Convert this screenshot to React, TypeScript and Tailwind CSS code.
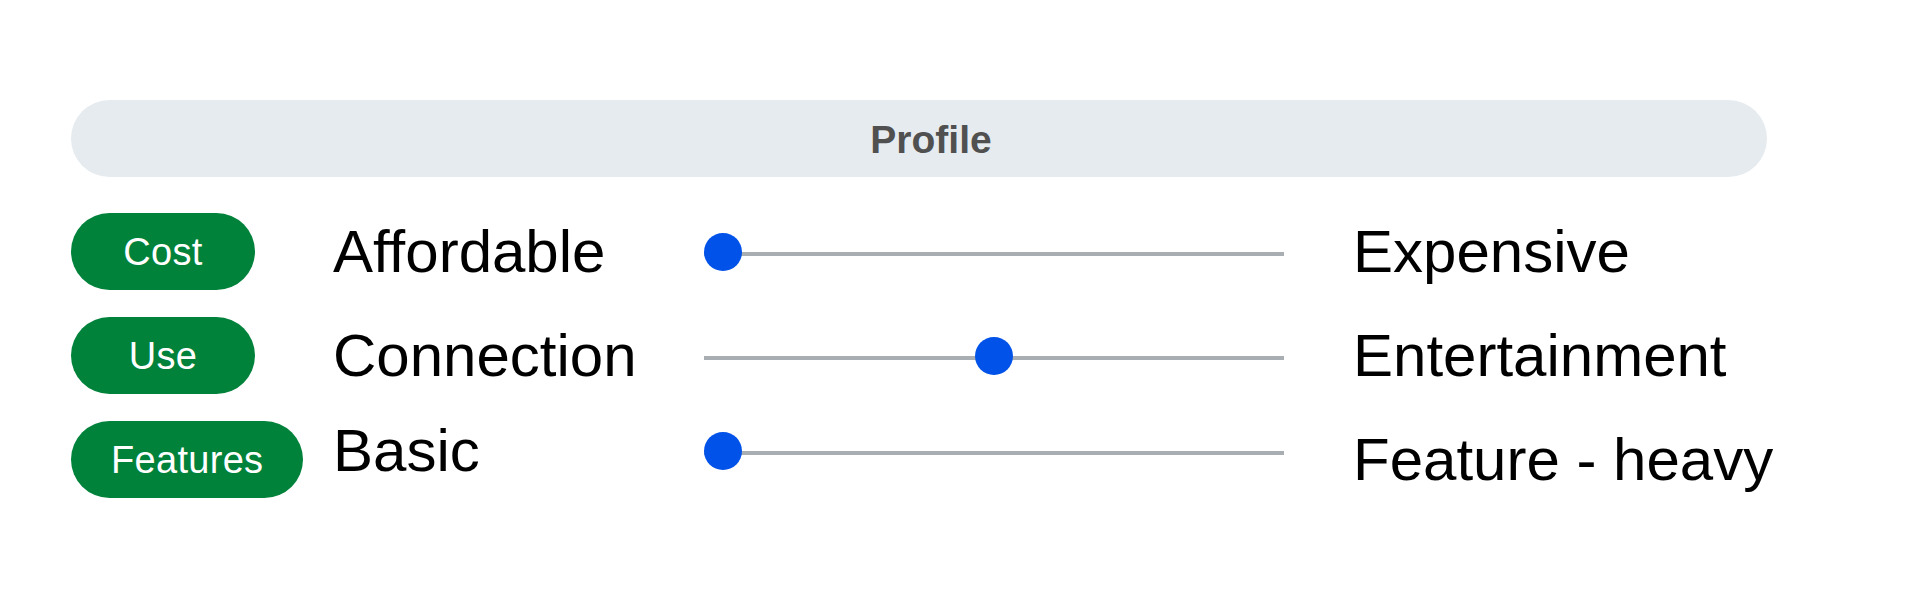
const rows = [
  { tag: "Cost", left: "Affordable", right: "Expensive", value: 0, shift: false },
  { tag: "Use", left: "Connection", right: "Entertainment", value: 0.5, shift: false },
  { tag: "Features", left: "Basic", right: "Feature - heavy", value: 0, shift: true },
];

const Slider = ({ value }: { value: number }) => {
  return (
    <div className="relative h-[4px] w-[580px] bg-[#a9aeb2]">
      <div
        className="absolute top-[-19px] h-[38px] w-[38px] rounded-full bg-[#0052e8]"
        style={{ left: `${value * 542}px` }}
      />
    </div>
  );
};

const App = () => {
  return (
    <div
      className="h-[600px] w-[1920px] bg-white pt-[100px] pl-[71px]"
      style={{ fontFamily: '"Liberation Sans", Arial, sans-serif' }}
    >
      <div className="flex h-[77px] w-[1696px] items-center justify-center rounded-full bg-[#e6ebef] pt-[2px] pl-[24px]">
        <span className="text-[39px] font-bold leading-none text-[#505050]">Profile</span>
      </div>

      <div className="mt-[36px] flex flex-col gap-[27px]">
        {rows.map((row) => (
          <div key={row.tag} className="flex h-[77px] items-center">
            <div className="w-[262px]">
              <div className="inline-flex h-[77px] min-w-[184px] items-center justify-center rounded-full bg-[#00823b] px-[40px] text-[38px] leading-none tracking-[0.3px] text-white">
                {row.tag}
              </div>
            </div>
            <div
              className={
                row.shift
                  ? "mb-[18px] w-[371px] text-[60px] leading-none text-black"
                  : "w-[371px] text-[60px] leading-none text-black"
              }
            >
              {row.left}
            </div>
            <div className={row.shift ? "mb-[14px]" : "mt-[4px]"}>
              <Slider value={row.value} />
            </div>
            <div className="ml-[69px] text-[60px] leading-none text-black">{row.right}</div>
          </div>
        ))}
      </div>
    </div>
  );
};

export default App;
